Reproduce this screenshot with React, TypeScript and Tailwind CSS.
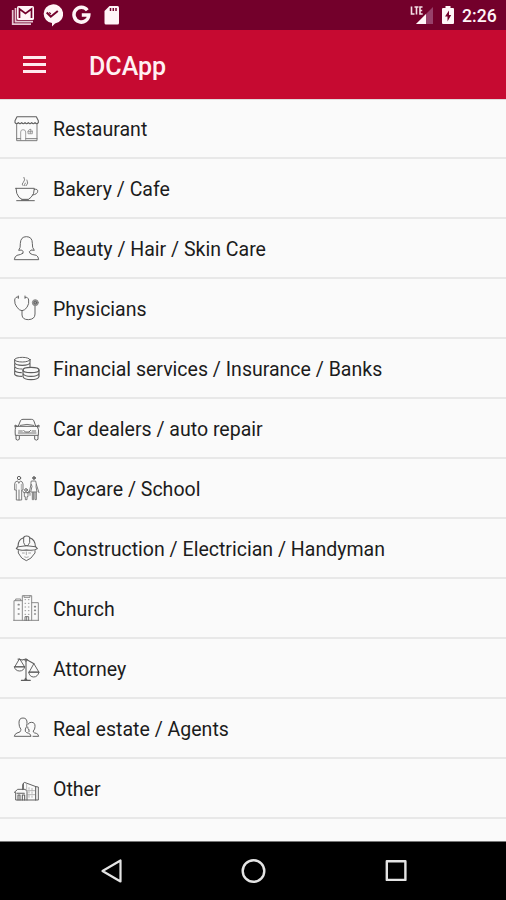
import type { ReactNode } from "react";

function LineIcon({ children }: { children: ReactNode }) {
  return (
    <svg
      viewBox="0 0 84 84"
      className="h-7 w-7 shrink-0"
      fill="none"
      stroke="#5e5e5e"
      strokeWidth="2.9"
      strokeLinecap="round"
      strokeLinejoin="round"
    >
      {children}
    </svg>
  );
}

const categories: { label: string; icon: ReactNode }[] = [
  {
    label: "Restaurant",
    icon: (
      <>
        <path d="M12 5H70L76 17V23Q71 29 66 23Q61 29 56 23Q51 29 46 23Q41 29 36 23Q31 29 26 23Q21 29 16 23Q11 29 6 23V17Z" strokeWidth="3.2" />
        <path d="M11 28V77H72V28M11 71H23M38 71H72" stroke="#777" />
        <path d="M23 76V51Q23 44 30 44Q38 44 38 51V76M45 55V48Q52 38 58 48V55ZM45 50H58M52 43V55" strokeWidth="2.3" stroke="#888" />
      </>
    ),
  },
  {
    label: "Bakery / Cafe",
    icon: (
      <>
        <path d="M9 40H64Q64 59 54 67L46 73H27L18 67Q9 57 9 40Z" />
        <path d="M64 43Q75 41 74 49Q73 58 59 60M11 77H64M25 75H47" />
        <path d="M30 32Q24 27 31 22Q38 15 33 7M40 32Q48 25 42 15M35 32Q33 28 37 24" strokeWidth="2.3" />
      </>
    ),
  },
  {
    label: "Beauty / Hair / Skin Care",
    icon: (
      <path d="M29 55L31 50Q27 48 26 45L17 46Q23 39 22 25Q23 5 40 5Q58 5 58 25Q57 39 64 46L54 45Q53 48 49 50L51 55Q55 59 70 61Q76 64 77 74H4Q5 64 12 61Q25 59 29 55Z" />
    ),
  },
  {
    label: "Physicians",
    icon: (
      <>
        <path d="M16 6Q7 4 5 15Q4 27 12 37Q20 47 27 47Q34 47 42 37Q49 26 47 15Q45 5 37 7" />
        <path d="M16 3V10M36 3V10M27 47V60Q28 74 46 74Q66 73 66 57V32" />
        <circle cx="67" cy="23" r="9" fill="#999" stroke="#888" />
        <circle cx="67" cy="23" r="4" />
      </>
    ),
  },
  {
    label: "Financial services / Insurance / Banks",
    icon: (
      <>
        <ellipse cx="28" cy="14" rx="23" ry="7" />
        <path d="M5 14V23Q7 31 28 31Q49 31 51 23V14M5 26V34Q8 42 27 42M5 37V46Q8 53 25 53M5 48V58Q9 64 26 64M51 25V35" strokeWidth="3.3" />
        <ellipse cx="54" cy="45" rx="24" ry="8" strokeWidth="3.8" />
        <path d="M30 45V65Q33 74 54 74Q75 74 78 65V45M30 55Q33 64 54 64Q75 64 78 55" strokeWidth="3.6" />
      </>
    ),
  },
  {
    label: "Car dealers / auto repair",
    icon: (
      <>
        <path d="M16 33L23 16Q25 13 30 13H55Q60 13 62 16L68 33M7 34H76M9 35Q5 39 7 61H76Q79 42 73 34M6 36V30L14 34M78 36V30L70 34" />
        <path d="M9 62V73Q14 78 19 73V64M65 64V73Q70 78 75 73V62" />
        <path d="M17 48H28M57 48H68M32 46L37 51H48L53 46M16 54H69M22 31Q42 25 62 31" strokeWidth="2.6" />
      </>
    ),
  },
  {
    label: "Daycare / School",
    icon: (
      <>
        <circle cx="18" cy="9" r="5" />
        <path d="M13 18Q5 19 5 27V45H10V75H26V45H30V27Q29 19 22 18L18 24ZM18 45V75" stroke="#777" />
        <path d="M10 28V43M25 28V43" strokeWidth="2" stroke="#888" />
        <circle cx="63" cy="9" r="4" fill="#888" />
        <path d="M56 18H68L70 27L69 35L72 51H53L57 34L54 26ZM58 52V74H62V52M66 52V74H70V52M70 28L78 53M54 28L49 51" stroke="#777" />
        <circle cx="39" cy="45" r="4" />
        <path d="M33 53H45L48 48M33 53L29 48M34 54V65H37V74H42V65H45V54M42 53H51V61" strokeWidth="2.3" />
      </>
    ),
  },
  {
    label: "Construction / Electrician / Handyman",
    icon: (
      <>
        <path d="M15 34Q15 13 32 8Q33 3 41 3Q49 3 50 8Q67 14 67 34L73 41Q65 48 40 45Q17 48 10 41Z" strokeWidth="3.3" />
        <path d="M32 8V23Q35 28 36 32H45Q46 28 50 23V8M17 35Q40 29 66 35M16 47V54L20 60Q23 70 40 77Q57 70 61 60L66 54V47" />
        <path d="M24 47Q40 42 57 47M28 54H34M47 54H53M40 51V59M35 66Q40 69 46 66" strokeWidth="2.2" stroke="#888" />
      </>
    ),
  },
  {
    label: "Church",
    icon: (
      <>
        <path d="M28 76V2H56V76M2 76H77M28 17H3V76M56 23H76V76" stroke="#888" />
        <path d="M8 16V12H23V16M33 2V7H51V2" stroke="#888" />
        <path d="M36 14H38M46 14H48M36 25H38M46 25H48M36 36H38M46 36H48M36 47H38M46 47H48M36 58H38M46 58H48" strokeWidth="3" stroke="#999" />
        <path d="M16 29H18M16 42H18M16 57H18M65 35H67M65 46H67M65 57H67" strokeWidth="5" stroke="#888" />
        <path d="M36 76V65H47V76M41 66V76" strokeWidth="2.5" />
      </>
    ),
  },
  {
    label: "Attorney",
    icon: (
      <>
        <path d="M15 12L28 15Q39 10 47 17L63 26M39 17V74M25 76H52M35 75L38 69L42 75" strokeWidth="3.3" />
        <path d="M19 12L5 36H34ZM4 36Q7 48 20 48Q32 48 35 36ZM62 27L48 52H77ZM47 52Q50 66 62 66Q74 66 78 52Z" />
        <circle cx="39" cy="15" r="3.5" />
      </>
    ),
  },
  {
    label: "Real estate / Agents",
    icon: (
      <>
        <path d="M23 42Q18 36 18 25Q17 9 30 9Q43 9 42 25Q42 36 37 42V49Q39 53 47 55Q53 57 54 64H4Q5 57 12 54Q23 52 23 48Z" />
        <path d="M45 28Q48 21 55 22Q67 22 66 35Q66 43 61 48V51Q63 54 70 55Q76 57 77 64H60M47 44Q44 41 44 36M48 45V50" />
      </>
    ),
  },
  {
    label: "Other",
    icon: (
      <>
        <path d="M29 44V29L34 22L69 35L76 36V75H8V52L4 52L14 43H37L42 50V75" />
        <path d="M31 25V42M68 35V75M12 55H34M15 75V60H21V75M28 75V60H35V75" strokeWidth="3.2" />
        <path d="M41 27V46M48 38V43M57 40V45M48 50V54M57 51V55M48 62V67M57 63V67M43 47H65M43 59H65" strokeWidth="2.2" stroke="#999" />
      </>
    ),
  },
];

function StatusBar() {
  return (
    <div className="flex h-[30px] shrink-0 items-center justify-between bg-[#73002b] pl-[11px] pr-[9px]">
      <div className="flex items-center gap-[8px]">
        <svg className="h-[22px] w-[24px]" viewBox="0 0 24 22" fill="none">
          <path d="M1.7 6V20.2H20M4.5 4V17.6H22" stroke="#e6c8d3" strokeWidth="1.7" />
          <rect x="6" y="2" width="17" height="14" rx="1.5" fill="#fff5f7" />
          <path d="M8.5 14V5L14.5 9.5L20.5 5V14" stroke="#73002b" strokeWidth="1.7" />
        </svg>
        <svg className="-ml-[1px] h-6 w-[21px]" viewBox="0 0 21 24">
          <path d="M10 1.5A9.5 9.5 0 1 1 13 20.5L10 23.5V20A9.3 9.3 0 0 1 10 1.5Z" fill="#fff5f7" />
          <path d="M4.7 9.5L8.8 13.7L15.8 8" fill="none" stroke="#73002b" strokeWidth="2" />
          <path d="M7.2 9.4L8.8 11" stroke="#73002b" strokeWidth="1.3" />
        </svg>
        <svg className="ml-[1px] h-5 w-[19px]" viewBox="0 0 19 20">
          <path d="M15.3 5.2A7.4 7.4 0 1 0 16.8 10H9.8" fill="none" stroke="#fff5f7" strokeWidth="3.5" />
        </svg>
        <svg className="ml-[5px] h-5 w-4" viewBox="0 0 16 20">
          <path d="M5.5 1H13.5Q15 1 15 2.5V18Q15 19.5 13.5 19.5H2Q.5 19.5 .5 18V6Z" fill="#fff5f7" />
          <path d="M6.5 3V6M9.3 3V6M12 3V6" stroke="#73002b" strokeWidth="1.5" />
        </svg>
      </div>
      <div className="flex items-center">
        <svg className="h-[22px] w-6" viewBox="0 0 24 22">
          <path d="M23 3V20H6Z" fill="#97406a" />
          <path d="M16 10V20H6Z" fill="#fff5f7" />
          <path d="M1.5 2.5V10H4.5M4.5 3H8.5M6.5 3V10.5M12.5 3H10V10H12.7M10 6.5H12.2" fill="none" stroke="#f4dfe6" strokeWidth="1.6" />
        </svg>
        <svg className="ml-[8px] h-5 w-3" viewBox="0 0 12 20">
          <path d="M3.5 1H8.5V3H11Q12 3 12 4V18Q12 19 11 19H1Q0 19 0 18V4Q0 3 1 3H3.5Z" fill="#fff5f7" />
          <path d="M7 5.5L3 11.5H5.5V16.5L9.2 10H7Z" fill="#73002b" />
        </svg>
        <span className="ml-[8px] mt-[3px] w-[35px] whitespace-nowrap text-[17.6px] font-medium leading-none text-[#fff5f7]">2:26</span>
      </div>
    </div>
  );
}

export default function App() {
  return (
    <div className="flex h-[900px] w-[506px] flex-col overflow-hidden bg-[#fafafa] font-[Roboto,sans-serif]">
      <StatusBar />
      <header className="flex h-[69px] shrink-0 items-center bg-[#c60a31] pb-px pl-[23px] shadow-[0_1px_0_#dfdcdc]">
        <div className="flex w-[23px] flex-col gap-[4px]">
          <div className="h-[3px] bg-[#ffe9ed]" />
          <div className="h-[3px] bg-[#ffe9ed]" />
          <div className="h-[3px] bg-[#ffe9ed]" />
        </div>
        <h1 className="ml-[43px] mt-[5px] text-[25px] font-medium leading-none text-[#fff1f3]">DCApp</h1>
      </header>
      <ul className="flex-1">
        {categories.map(({ label, icon }) => (
          <li key={label} className="flex h-[60px] items-center border-b-2 border-[#e8e8e8] pl-[13px] pt-[2px]">
            <LineIcon>{icon}</LineIcon>
            <span className="ml-[12px] mt-[2px] text-[19.55px] text-[#1c1c1c]">{label}</span>
          </li>
        ))}
      </ul>
      <nav className="flex h-[59px] shrink-0 items-center border-t border-[#777] bg-black pl-[100px]">
        <svg className="h-7 w-6" viewBox="0 0 24 28" fill="none" stroke="#e4e4e4" strokeWidth="2.2" strokeLinejoin="round">
          <path d="M20.5 3.5V24.5L2.5 14Z" />
        </svg>
        <svg className="ml-[116px] h-7 w-7" viewBox="0 0 28 28" fill="none" stroke="#e4e4e4" strokeWidth="2.4">
          <circle cx="13.5" cy="14" r="10.8" />
        </svg>
        <svg className="ml-[115px] h-7 w-7" viewBox="0 0 28 28" fill="none" stroke="#e4e4e4" strokeWidth="2.4" strokeLinejoin="round">
          <rect x="3.8" y="4.3" width="18.6" height="18.6" />
        </svg>
      </nav>
    </div>
  );
}
